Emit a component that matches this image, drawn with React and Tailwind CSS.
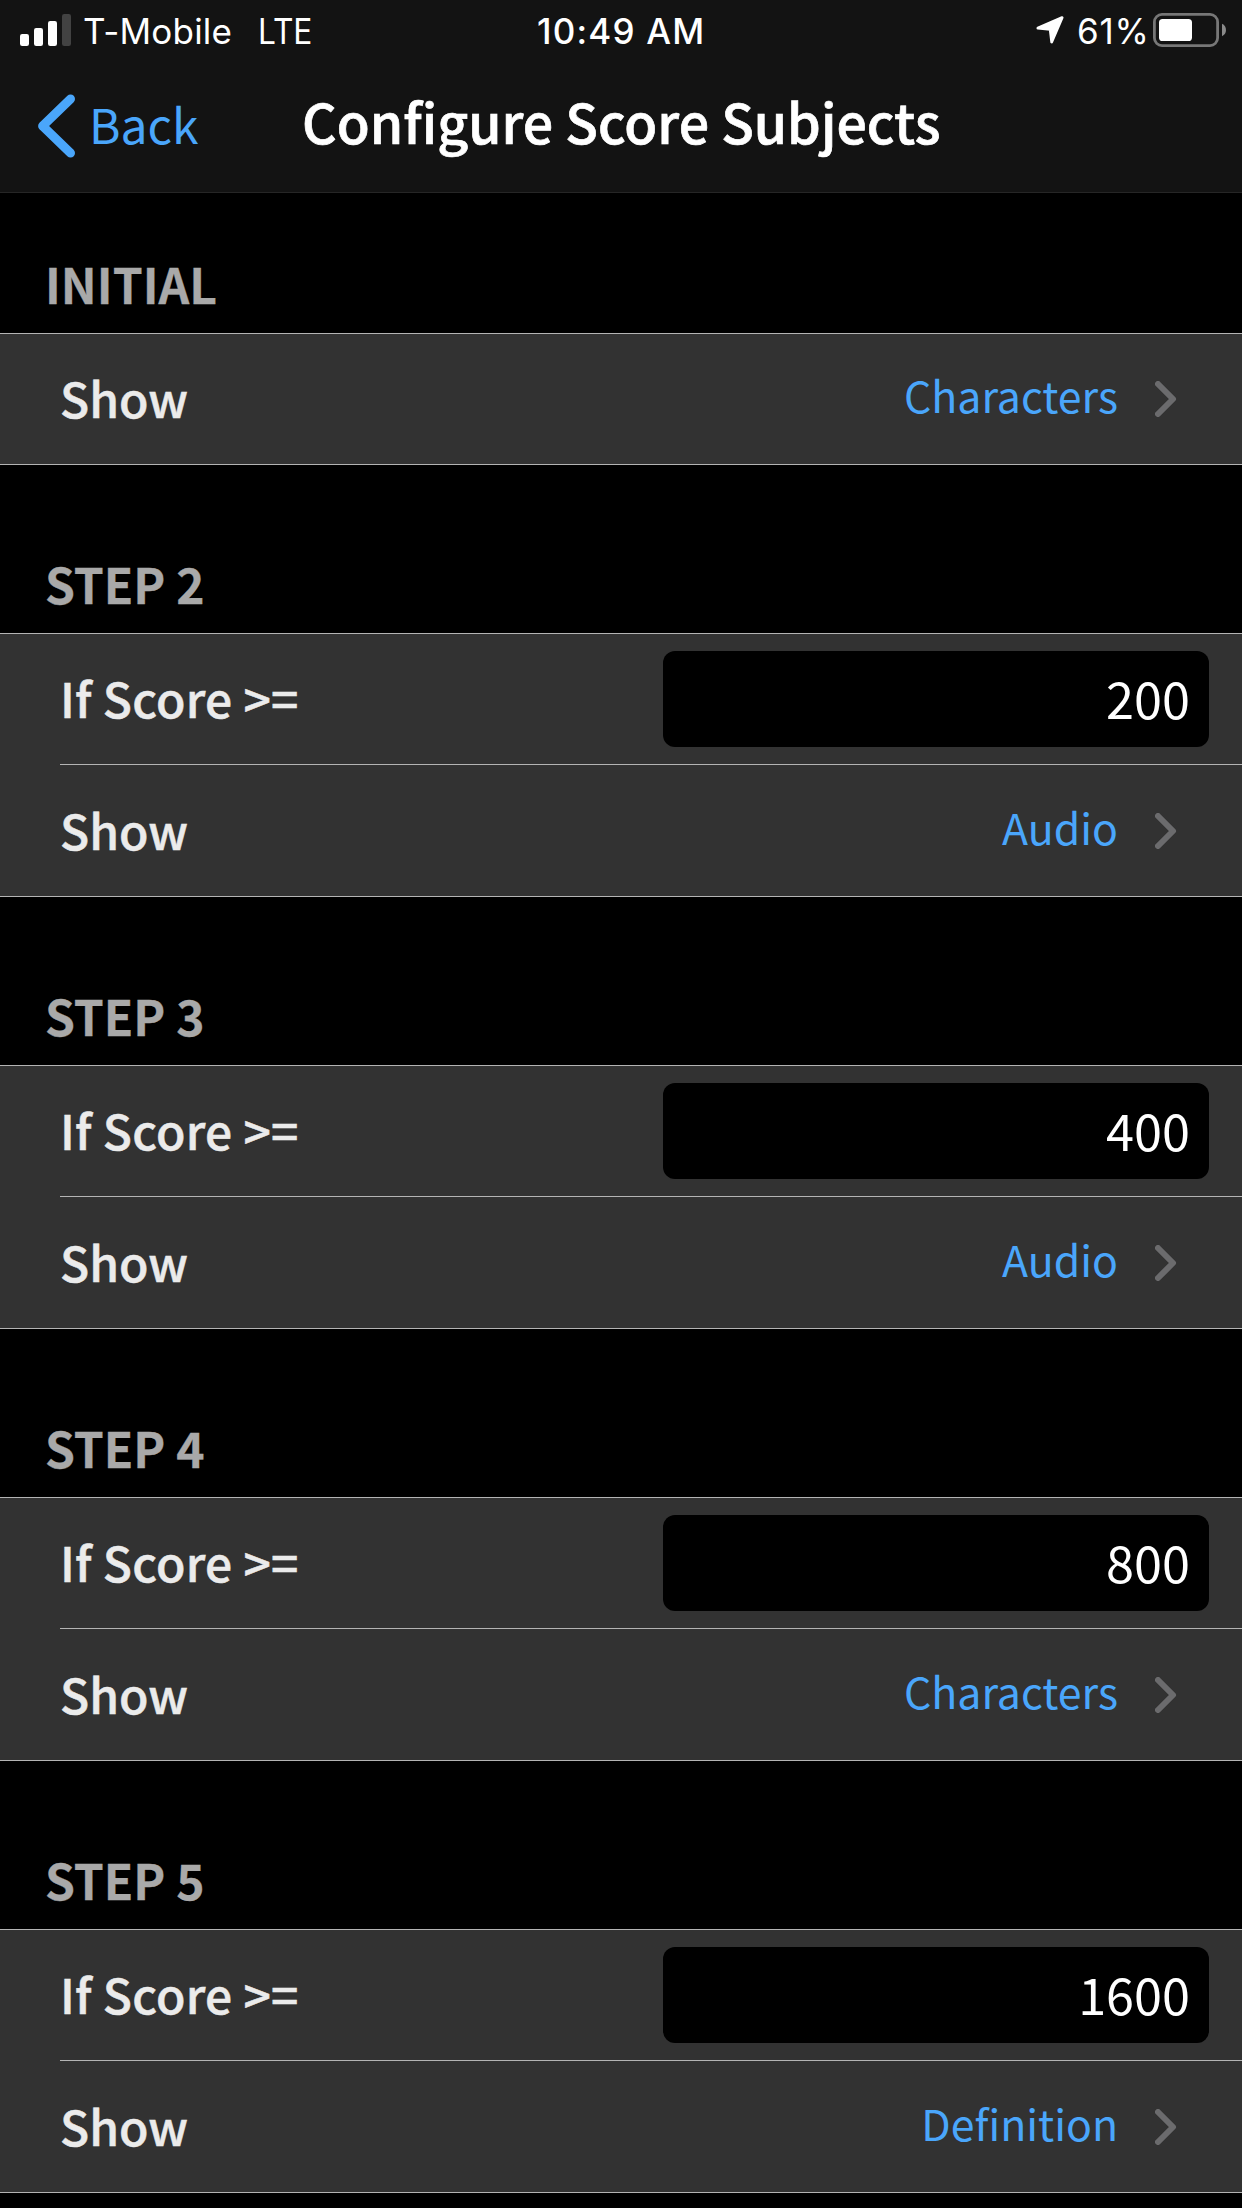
import React from "react";

const steps = [
  { title: "INITIAL", show: "Characters" },
  { title: "STEP 2", score: "200", show: "Audio" },
  { title: "STEP 3", score: "400", show: "Audio" },
  { title: "STEP 4", score: "800", show: "Characters" },
  { title: "STEP 5", score: "1600", show: "Definition" },
];

function SignalBars() {
  return (
    <svg width="51" height="32" viewBox="0 0 51 32" fill="#fff" className="block shrink-0">
      <rect x="0" y="20" width="9" height="12" rx="2.2" />
      <rect x="14" y="14" width="9" height="18" rx="2.2" />
      <rect x="28" y="7" width="9" height="25" rx="2.2" />
      <rect x="42" y="0" width="9" height="32" rx="2.2" fill="#424242" />
    </svg>
  );
}

function LocationArrow() {
  return (
    <svg width="28" height="28" viewBox="0 0 28 28" className="block shrink-0">
      <path
        d="M1.9 12.1 L26.1 1.6 L15.7 26 L14.2 13.4 Z"
        fill="#fff"
        stroke="#fff"
        strokeWidth="2.8"
        strokeLinejoin="round"
      />
    </svg>
  );
}

function Battery() {
  return (
    <svg width="74" height="34" viewBox="0 0 74 34" className="block shrink-0">
      <rect x="1.4" y="1.4" width="63.2" height="31.2" rx="7.6" fill="none" stroke="#777" strokeWidth="2.8" />
      <rect x="6" y="6" width="33" height="22" rx="3.6" fill="#fff" />
      <path d="M69 10.8 C74.3 13 74.3 21 69 23.2 Z" fill="#8a8a8a" />
    </svg>
  );
}

function BackChevron() {
  return (
    <svg width="38" height="64" viewBox="0 0 38 64" className="block shrink-0">
      <path
        d="M32.5 5 L4.6 32 L32.5 59"
        fill="none"
        stroke="#4aa6fb"
        strokeWidth="9"
        strokeLinecap="round"
        strokeLinejoin="round"
      />
    </svg>
  );
}

function Chevron() {
  return (
    <svg width="22" height="36" viewBox="0 0 22 36" className="block shrink-0">
      <path
        d="M3 3 L18 18 L3 33"
        fill="none"
        stroke="#6b6b6d"
        strokeWidth="6"
        strokeLinecap="round"
        strokeLinejoin="round"
      />
    </svg>
  );
}

function StatusBar() {
  return (
    <div className="grid h-[60px] grid-cols-[536px_1fr_206px] items-center font-['Inter',sans-serif] text-[35px] leading-[40px] text-white">
      <div className="flex items-center pl-[20px]">
        <SignalBars />
        <span className="ml-[12px] mt-[2px] whitespace-nowrap tracking-[0.2px]">T-Mobile</span>
        <span className="ml-[26px] mt-[2px] origin-left scale-x-[0.906]">LTE</span>
      </div>
      <span className="mt-[2px] whitespace-nowrap pl-px font-[550] tracking-[1.2px]">10:49 AM</span>
      <div className="flex items-center">
        <LocationArrow />
        <span className="ml-[13px] mt-[2px] w-[76px] tracking-[0.8px]">61%</span>
        <Battery />
      </div>
    </div>
  );
}

function NavBar() {
  return (
    <div className="grid h-[132px] grid-cols-[302px_1fr_302px] items-center">
      <div className="flex items-center pl-[38px] text-[#4aa6fb]">
        <BackChevron />
        <span className="mb-[6px] ml-[13px] text-[48px] leading-[60px]">Back</span>
      </div>
      <h1 className="mb-[11px] whitespace-nowrap text-center text-[53.7px] font-medium leading-[70px] text-white [-webkit-text-stroke:0.7px_#fff]">
        Configure Score Subjects
      </h1>
    </div>
  );
}

function Label({ children }) {
  return (
    <span className="mb-[4px] whitespace-pre text-[48px] font-medium leading-[60px] text-[#ebebeb] [-webkit-text-stroke:0.5px_#ebebeb]">
      {children}
    </span>
  );
}

function ScoreRow({ score }) {
  return (
    <div className="flex h-[130px] items-center justify-between pl-[60px] pr-[33px]">
      <Label>
        <span className="tracking-[0.2px]">{"If Score >="}</span>
      </Label>
      <div className="h-[96px] w-[546px] rounded-[12px] bg-black pr-[19px] text-right text-[50.4px] leading-[94px] text-white">
        {score}
      </div>
    </div>
  );
}

function ShowRow({ value }) {
  return (
    <div className="flex h-full items-center pl-[60px] pr-[65px]">
      <Label>Show</Label>
      <span className="mb-[10px] ml-auto mr-[37px] text-[42.8px] leading-[60px] text-[#4aa6fb]">{value}</span>
      <Chevron />
    </div>
  );
}

function Section({ title, score, show }) {
  return (
    <section>
      <h2
        className={`flex items-end pb-[20px] pl-[45px] text-[48px] font-bold leading-[60px] text-[#a9a9a9] [-webkit-text-stroke:0.3px_#a9a9a9] ${
          score ? "h-[168px]" : "h-[140px]"
        }`}
      >
        {title}
      </h2>
      <div className="border-y border-[#b4b4b4] bg-[#323232]">
        {score && (
          <>
            <ScoreRow score={score} />
            <div className="ml-[60px] h-px bg-[#b4b4b4]" />
          </>
        )}
        <div className={score ? "h-[131px] pt-px" : "h-[130px]"}>
          <ShowRow value={show} />
        </div>
      </div>
    </section>
  );
}

export default function App() {
  return (
    <div className="h-[2208px] w-[1242px] overflow-hidden bg-black font-['Noto_Sans_CJK_SC',sans-serif]">
      <header className="border-b border-[#262626] bg-[#131313]">
        <StatusBar />
        <NavBar />
      </header>
      <main>
        {steps.map((step) => (
          <Section key={step.title} {...step} />
        ))}
      </main>
    </div>
  );
}
